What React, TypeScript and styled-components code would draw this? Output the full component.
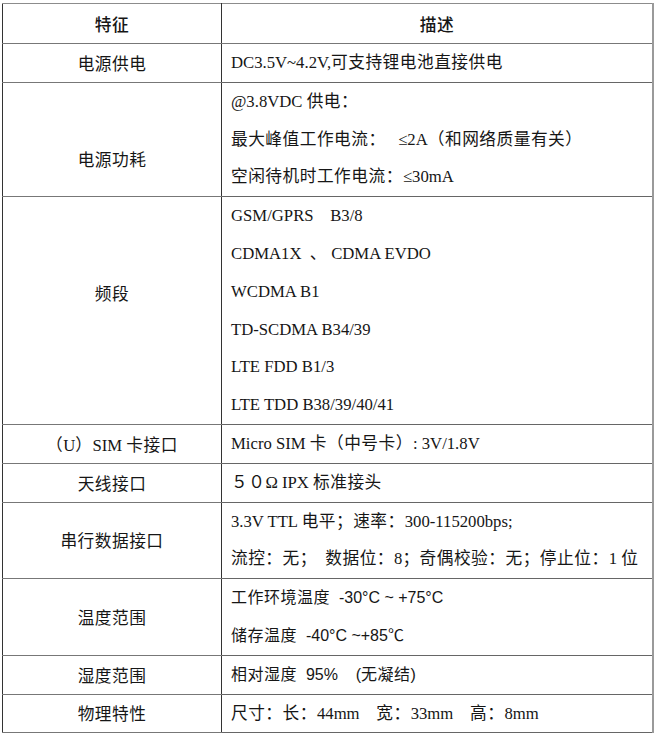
import React from "react";
import styled, { createGlobalStyle } from "styled-components";

const GlobalStyle = createGlobalStyle`
  html, body { margin: 0; padding: 0; background: #ffffff; }
`;

const Page = styled.div`
  padding: 3px 0 0 2px;
`;

const Table = styled.table`
  border-collapse: collapse;
  table-layout: fixed;
  width: 652px;
  font-family: "Liberation Serif", "Noto Sans CJK SC", serif;
  font-size: 16.7px;
  color: #161616;
`;

const HeadCell = styled.th`
  height: 39px;
  padding: 0;
  font-weight: 500;
  text-align: center;
  border-top: 1px solid #8c8c8c;
  border-bottom: 1px solid #777;
  border-left: 1px solid #333;
  border-right: 1px solid #333;
  &:last-child { border-right: 2px solid #9a9a9a; }
`;

const LabelCell = styled.td<{ $shift?: number }>`
  padding: ${(p) => ((p.$shift ?? 0) > 0 ? `${2 * (p.$shift ?? 0)}px 0 0` : `0 0 ${-2 * (p.$shift ?? 0)}px`)};
  text-align: center;
  vertical-align: middle;
  border-top: 1px solid #777;
  border-bottom: 1px solid #777;
  border-left: 1px solid #333;
  border-right: 1px solid #333;
`;

const DescCell = styled.td`
  padding: 0 0 0 9px;
  vertical-align: middle;
  border-top: 1px solid #777;
  border-bottom: 1px solid #666;
  border-left: 1px solid #333;
  border-right: 2px solid #9a9a9a;
`;

const Line = styled.div`
  height: 37.8px;
  line-height: 37.8px;
  white-space: pre;
`;

const Cjk = styled.span`
  letter-spacing: 0.5px;
`;

const Sans = styled.span`
  font-family: "Liberation Sans", "Noto Sans CJK SC", sans-serif;
  font-size: 16px;
`;

type Seg = string | { sans: string };

const CJK_RE = /([\u2E80-\u9FFF\uFF00-\uFFEF\u3000-\u303F]+)/;

function Txt({ text }: { text: string }) {
  const parts = text.split(CJK_RE).filter((p) => p.length > 0);
  return (
    <>
      {parts.map((p, i) =>
        CJK_RE.test(p) ? <Cjk key={i}>{p}</Cjk> : <React.Fragment key={i}>{p}</React.Fragment>
      )}
    </>
  );
}

function Segs({ segs }: { segs: Seg[] }) {
  return (
    <>
      {segs.map((s, i) =>
        typeof s === "string" ? (
          <Txt key={i} text={s} />
        ) : (
          <Sans key={i}>
            <Txt text={s.sans} />
          </Sans>
        )
      )}
    </>
  );
}

const rows: { label: string; shift?: number; lines: Seg[][] }[] = [
  { label: "电源供电", lines: [["DC3.5V~4.2V,可支持锂电池直接供电"]] },
  {
    label: "电源功耗",
    shift: 20,
    lines: [
      ["@3.8VDC 供电："],
      ["最大峰值工作电流：   ≤2A（和网络质量有关）"],
      ["空闲待机时工作电流：≤30mA"],
    ],
  },
  {
    label: "频段",
    shift: -18,
    lines: [
      ["GSM/GPRS    B3/8"],
      ["CDMA1X  、 CDMA EVDO"],
      ["WCDMA B1"],
      ["TD-SCDMA B34/39"],
      ["LTE FDD B1/3"],
      ["LTE TDD B38/39/40/41"],
    ],
  },
  { label: "（U）SIM 卡接口", lines: [["Micro SIM 卡（中号卡）: 3V/1.8V"]] },
  { label: "天线接口", lines: [["５０Ω IPX 标准接头"]] },
  {
    label: "串行数据接口",
    lines: [
      ["3.3V TTL 电平；速率：300-115200bps;"],
      ["流控：无；  数据位：8；奇偶校验：无；停止位：1 位"],
    ],
  },
  {
    label: "温度范围",
    lines: [[{ sans: "工作环境温度  -30°C ~ +75°C" }], [{ sans: "储存温度  -40°C ~+85℃" }]],
  },
  { label: "湿度范围", lines: [[{ sans: "相对湿度  95%    (无凝结)" }]] },
  { label: "物理特性", lines: [["尺寸：长：44mm    宽：33mm    高：8mm"]] },
];

export default function App() {
  return (
    <>
      <GlobalStyle />
      <Page>
        <Table>
          <colgroup>
            <col style={{ width: 219 }} />
            <col />
          </colgroup>
          <thead>
            <tr>
              <HeadCell>
                <Txt text="特征" />
              </HeadCell>
              <HeadCell>
                <Txt text="描述" />
              </HeadCell>
            </tr>
          </thead>
          <tbody>
            {rows.map((r, i) => (
              <tr key={i}>
                <LabelCell $shift={r.shift}>
                  <Txt text={r.label} />
                </LabelCell>
                <DescCell>
                  {r.lines.map((l, j) => (
                    <Line key={j}>
                      <Segs segs={l} />
                    </Line>
                  ))}
                </DescCell>
              </tr>
            ))}
          </tbody>
        </Table>
      </Page>
    </>
  );
}
